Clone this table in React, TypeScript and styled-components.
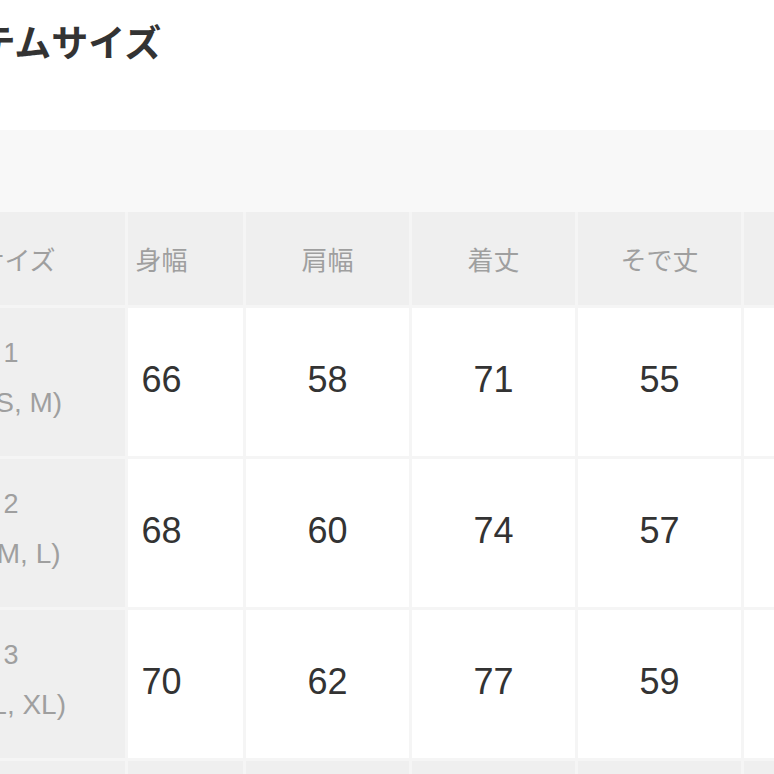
import React, { useLayoutEffect, useRef } from 'react';
import styled, { createGlobalStyle } from 'styled-components';

interface SizeRow {
  size: string
  note: string
  values: string[]
}

const columns = ['身幅', '肩幅', '着丈', 'そで丈', '裾幅']

const rows: SizeRow[] = [
  { size: '1', note: '(S, M)', values: ['66', '58', '71', '55', '62'] },
  { size: '2', note: '(M, L)', values: ['68', '60', '74', '57', '64'] },
  { size: '3', note: '(L, XL)', values: ['70', '62', '77', '59', '66'] },
]

const SCROLL_OFFSET = 51 // table is scrolled a bit to the right

const App: React.FC = () => {
  const scrollRef = useRef<HTMLDivElement>(null)

  useLayoutEffect(() => {
    if (scrollRef.current) {
      scrollRef.current.scrollLeft = SCROLL_OFFSET
    }
  }, [])

  return (
    <>
      <GlobalStyle />
      <Page>
        <Title>アイテムサイズ</Title>
        <Band />
        <Scroller ref={scrollRef}>
          <Grid>
            <LabelCell $header>サイズ</LabelCell>
            {columns.map(col => (
              <HeadCell key={col}>{col}</HeadCell>
            ))}
            {rows.map(row => (
              <React.Fragment key={row.size}>
                <LabelCell>
                  <SizeName>{row.size}</SizeName>
                  <SizeNote>{row.note}</SizeNote>
                </LabelCell>
                {row.values.map((v, i) => (
                  <ValueCell key={i}>{v}</ValueCell>
                ))}
              </React.Fragment>
            ))}
            <LabelCell $header />
            {columns.map(col => (
              <FootCell key={col} />
            ))}
          </Grid>
        </Scroller>
      </Page>
    </>
  )
}

export default App

const GlobalStyle = createGlobalStyle`
  html, body {
    margin: 0;
    padding: 0;
    background: #fff;
    overflow: hidden;
  }
  body {
    font-family: "Noto Sans CJK JP", "Noto Sans", sans-serif;
  }
`

const Page = styled.div`
  margin-left: -91px;
  width: calc(100vw + 91px);
`

const Title = styled.h2`
  margin: 22px 0 0 -2px;
  font-size: 37px;
  line-height: 39px;
  font-weight: 700;
  color: #333;
`

const Band = styled.div`
  margin-top: 69px;
  height: 82px;
  background: #f8f8f8;
`

const Scroller = styled.div`
  overflow-x: auto;
  overflow-y: hidden;
  scrollbar-width: none;
  &::-webkit-scrollbar {
    display: none;
  }
`

const Grid = styled.div`
  display: grid;
  grid-template-columns: 219px repeat(5, 163px);
  grid-template-rows: 93px repeat(3, 148px) 40px;
  gap: 3px;
  width: max-content;
  background: #f5f5f5;
`

const LabelCell = styled.div<{ $header?: boolean }>`
  position: sticky;
  left: 0;
  z-index: 1;
  box-sizing: border-box;
  border-right: 3px solid #f5f5f5;
  display: flex;
  flex-direction: column;
  align-items: center;
  justify-content: center;
  padding-bottom: ${p => (p.$header ? '0' : '8px')};
  background: #efefef;
  color: #9f9f9f;
  font-size: 26px;
`

const SizeName = styled.div`
  margin-right: 12px;
  font-family: "Liberation Sans", Arial, sans-serif;
  font-size: 27px;
  line-height: 50px;
`

const SizeNote = styled.div`
  margin-left: 14px;
  font-family: "Liberation Sans", Arial, sans-serif;
  font-size: 28px;
  line-height: 50px;
  white-space: nowrap;
`

const HeadCell = styled.div`
  display: flex;
  align-items: center;
  justify-content: center;
  background: #efefef;
  color: #9f9f9f;
  font-size: 26px;
`

const ValueCell = styled.div`
  display: flex;
  align-items: center;
  justify-content: center;
  padding-bottom: 4px;
  background: #fff;
  color: #333;
  font-family: "Liberation Sans", Arial, sans-serif;
  font-size: 36px;
`

const FootCell = styled.div`
  background: #efefef;
`
